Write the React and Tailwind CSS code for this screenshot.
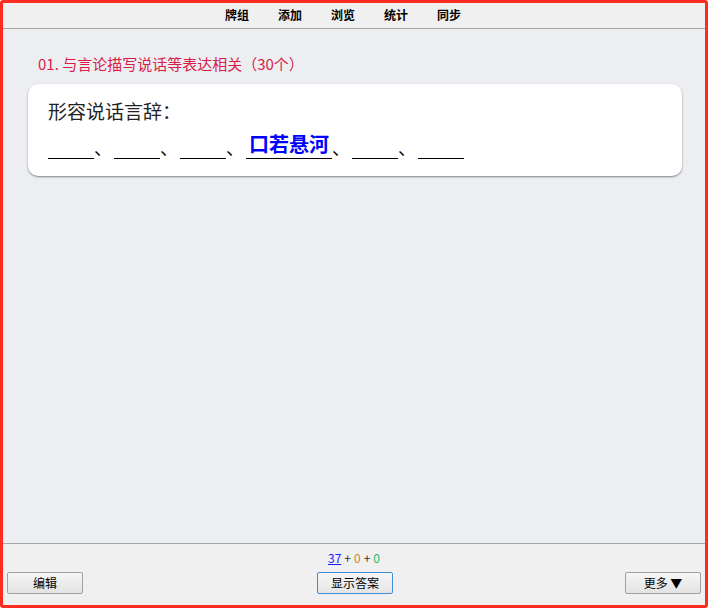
import React from "react";

const font = { fontFamily: '"Noto Sans CJK SC", "Noto Sans", sans-serif' };

function Blank({ children, w = "w-[46px]" }) {
  return (
    <span className={`inline-block ${w} border-b border-black h-[24px] align-bottom text-center`}>
      {children}
    </span>
  );
}

export default function App() {
  const navs = ["牌组", "添加", "浏览", "统计", "同步"];
  return (
    <div className="w-[710px] h-[610px] bg-white" style={font}>
      <div className="w-[708px] h-[608px] border-[3px] border-[#ff2b1f] rounded-[3px] flex flex-col overflow-hidden">
        <div className="h-[26px] shrink-0 bg-[#f0f0f0] border-b border-[#a9a9a9] flex justify-center items-center gap-[29px] pr-[22px] pb-[2px]">
          {navs.map((n) => (
            <span key={n} className="text-[12px] font-bold text-black leading-none">
              {n}
            </span>
          ))}
        </div>
        <div className="flex-1 bg-[#edeef2] pl-[25px] pr-[23px] pt-[25px]">
          <div className="text-[15px] text-[#d81e48] pl-[10px] leading-[20px]">
            01. 与言论描写说话等表达相关（30个）
          </div>
          <div className="mt-[10px] bg-white rounded-[10px] shadow-[0_1px_2px_rgba(0,0,0,0.45)] h-[92px] pl-[20px] pt-[14px]">
            <div className="text-[19px] leading-[26px] text-[#222]">形容说话言辞：</div>
            <div className="mt-[11px] flex items-end text-[18px] leading-[24px] text-black">
              <Blank />
              <span className="w-[20px]">、</span>
              <Blank />
              <span className="w-[20px]">、</span>
              <Blank />
              <span className="w-[20px]">、</span>
              <Blank w="w-[86px]">
                <span className="text-[20px] font-bold text-[#0000ff] leading-[24px] relative top-[-3px]">口若悬河</span>
              </Blank>
              <span className="w-[20px]">、</span>
              <Blank />
              <span className="w-[20px]">、</span>
              <Blank />
            </div>
          </div>
        </div>
        <div className="h-[62px] shrink-0 bg-[#f0f0f0] border-t border-[#a9a9a9] relative">
          <div className="flex justify-center pt-[6px] text-[12px] leading-[16px]">
            <span className="text-[#1a1aff] underline">37</span>
            <span className="text-[#333] px-[3px]">+</span>
            <span className="text-[#e0782a]">0</span>
            <span className="text-[#333] px-[3px]">+</span>
            <span className="text-[#1fb86a]">0</span>
          </div>
          <div className="flex items-center justify-between px-[4px] mt-[6px]">
            <button className="w-[76px] h-[22px] border border-[#a0a0a0] rounded-[2px] bg-gradient-to-b from-[#f6f6f6] to-[#e3e3e3] text-[12px] text-black leading-none">
              编辑
            </button>
            <button className="w-[76px] h-[22px] border border-[#3c8fd8] rounded-[2px] bg-gradient-to-b from-[#f6f6f6] to-[#e5e5e5] text-[12px] text-black leading-none ml-[2px]">
              显示答案
            </button>
            <button className="w-[76px] h-[22px] border border-[#a0a0a0] rounded-[2px] bg-gradient-to-b from-[#f6f6f6] to-[#e3e3e3] text-[12px] text-black leading-none">
              更多 ▼
            </button>
          </div>
        </div>
      </div>
    </div>
  );
}
